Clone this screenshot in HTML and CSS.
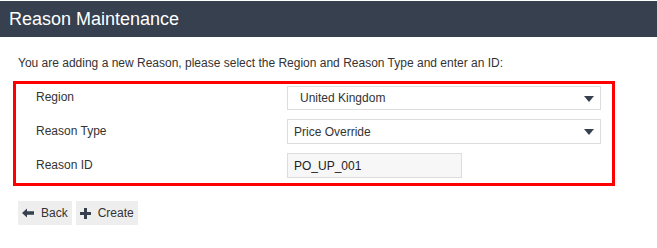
FILE: index.html
```html
<!DOCTYPE html>
<html lang="en">
<head>
    <meta charset="UTF-8">
    <title>Reason Maintenance</title>
    <link rel="stylesheet" href="styles.css">
</head>
<body>
    <div class="header">Reason Maintenance</div>
    <p class="intro">You are adding a new Reason, please select the Region and Reason Type and enter an ID:</p>

    <div class="form-box">
        <div class="form-row">
            <label for="region">Region</label>
            <div class="select-wrap">
                <select id="region" class="select region">
                    <option>United Kingdom</option>
                </select>
            </div>
        </div>
        <div class="form-row">
            <label for="reasonType">Reason Type</label>
            <div class="select-wrap">
                <select id="reasonType" class="select">
                    <option>Price Override</option>
                </select>
            </div>
        </div>
        <div class="form-row">
            <label for="reasonId">Reason ID</label>
            <input type="text" id="reasonId" class="text-input" value="PO_UP_001">
        </div>
    </div>

    <div class="actions">
        <button type="button" class="btn">
            <svg width="12" height="10" viewBox="0 0 12 10"><path d="M0 5 L5 0.5 L5 3.3 L12 3.3 L12 6.7 L5 6.7 L5 9.5 Z" fill="#36404f"/></svg>
            Back
        </button>
        <button type="button" class="btn">
            <svg width="11" height="11" viewBox="0 0 11 11"><path d="M4 0 H7 V4 H11 V7 H7 V11 H4 V7 H0 V4 H4 Z" fill="#36404f"/></svg>
            Create
        </button>
    </div>
</body>
</html>
```

FILE: styles.css
```css
body {
    margin: 0;
    font-family: 'Liberation Sans', Arial, sans-serif;
    font-size: 12px;
    color: #333;
    background-color: #fff;
}
.header {
    margin-top: 1px;
    height: 36px;
    line-height: 36px;
    padding-left: 9px;
    background-color: #36404f;
    color: #fff;
    font-size: 18px;
}
.intro {
    margin: 19px 0 0 18px;
    line-height: 14px;
}
.form-box {
    margin: 11px 0 0 13px;
    width: 596px;
    border: 3px solid #f00;
    padding: 2px 0 5px 0;
}
.form-row {
    display: grid;
    grid-template-columns: 251px 314px;
    align-items: center;
    padding-left: 20px;
    margin-bottom: 9px;
}
.form-row:last-child {
    margin-bottom: 0;
}
label {
    color: #333;
    margin-top: -2px;
}
.select-wrap {
    position: relative;
}
.select-wrap::after {
    content: "";
    position: absolute;
    right: 7px;
    top: 10px;
    border-left: 5px solid transparent;
    border-right: 5px solid transparent;
    border-top: 6px solid #36404f;
    pointer-events: none;
}
.select {
    appearance: none;
    -webkit-appearance: none;
    width: 314px;
    height: 25px;
    padding: 0 0 0 6px;
    border: 1px solid #ddd;
    border-radius: 0;
    background-color: #fff;
    font-family: 'Liberation Sans', Arial, sans-serif;
    font-size: 12px;
    color: #333;
}
.select.region {
    padding-left: 12px;
    height: 24px;
}
.text-input {
    box-sizing: border-box;
    width: 175px;
    height: 25px;
    padding: 0 6px;
    border: 1px solid #ddd;
    background-color: #f7f7f7;
    font-family: 'Liberation Sans', Arial, sans-serif;
    font-size: 12px;
    color: #222;
}
.actions {
    display: flex;
    gap: 4px;
    margin: 15px 0 0 18px;
}
.btn {
    display: flex;
    align-items: center;
    gap: 7px;
    height: 24px;
    padding: 0 4px;
    border: none;
    background-color: #eee;
    font-family: 'Liberation Sans', Arial, sans-serif;
    font-size: 12px;
    color: #333;
    cursor: pointer;
}
```
